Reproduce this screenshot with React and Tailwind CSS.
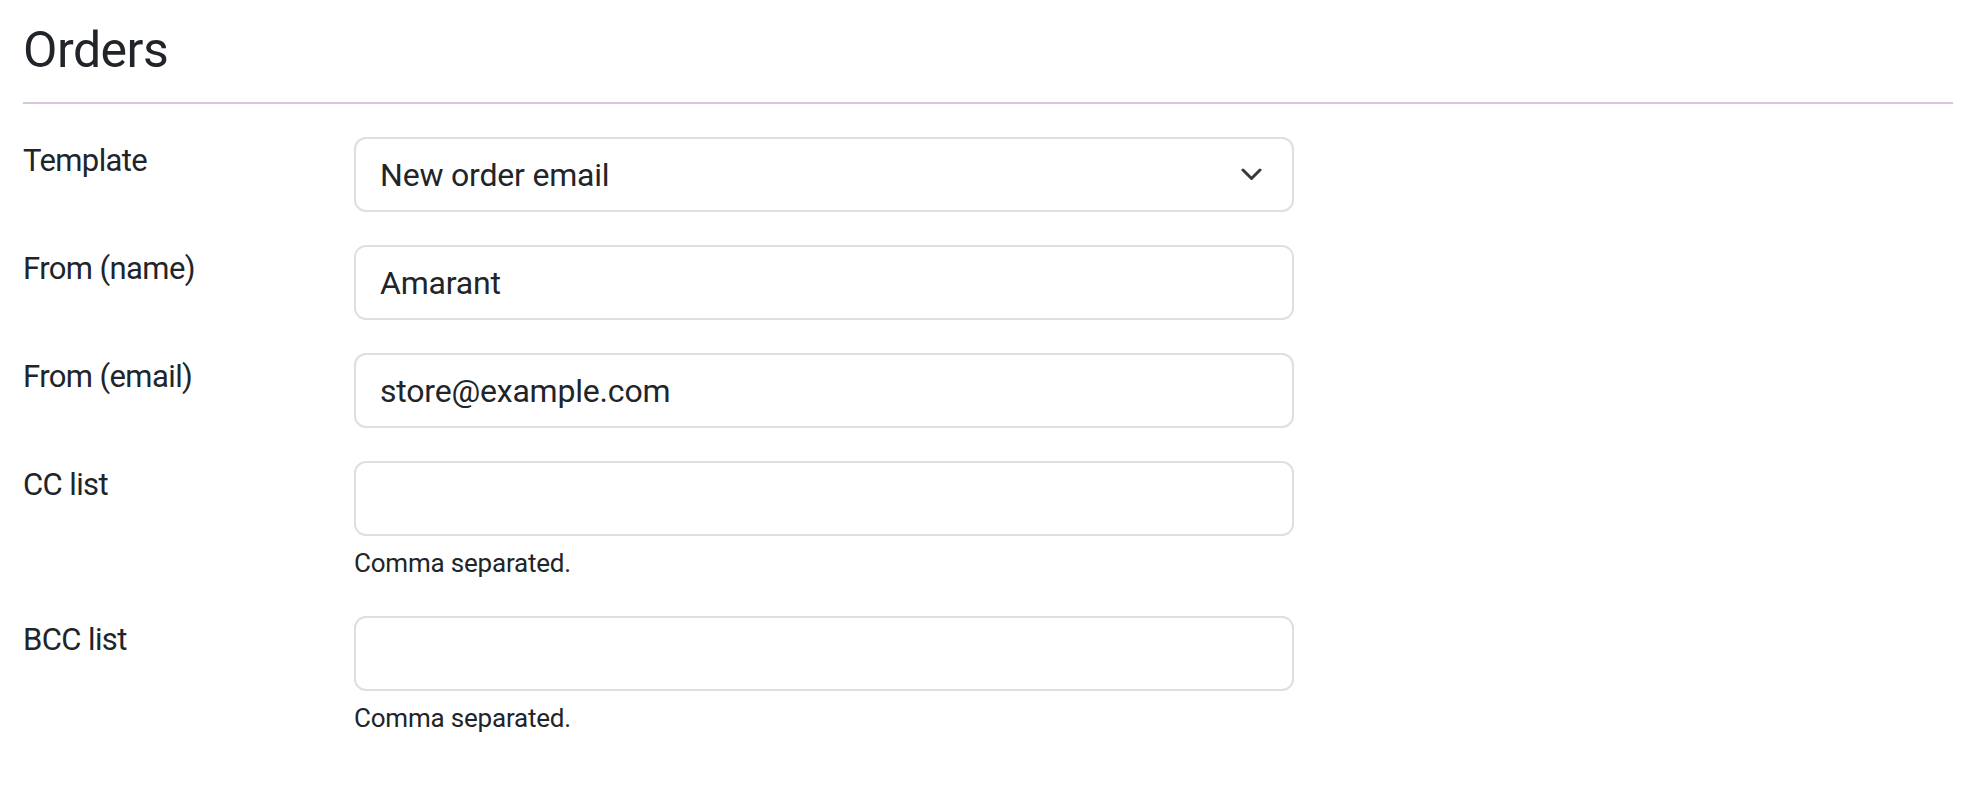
import React from "react";

const Chevron = () => (
  <svg width="21" height="13" viewBox="0 0 21 13" fill="none">
    <path d="M2 2 L10.5 10.5 L19 2" stroke="#343a40" strokeWidth="3" strokeLinecap="round" strokeLinejoin="round" />
  </svg>
);

const Field = ({ label, children, help }) => (
  <div className="flex">
    <label className="w-[331px] shrink-0 pt-[1px] text-[31px] leading-[46px] tracking-[-0.6px]">{label}</label>
    <div className="w-[940px]">
      {children}
      {help && <div className="mt-[8px] text-[26px] leading-[39px] tracking-[-0.2px]">{help}</div>}
    </div>
  </div>
);

const TextBox = ({ value }) => (
  <div className="h-[75px] flex items-center px-[24px] border-2 border-[#dcdfe3] rounded-[12px] bg-white text-[32px] tracking-[-0.2px]">
    {value}
  </div>
);

export default function App() {
  return (
    <div className="min-h-screen bg-white text-[#212529] px-[23px] pt-[21px]" style={{ fontFamily: "Roboto, sans-serif" }}>
      <h2 className="text-[50px] leading-[59px] font-normal tracking-[-0.5px]">Orders</h2>
      <div className="mt-[22px] h-[2px] bg-[#d6c6df]" />

      <div className="mt-[33px] flex flex-col gap-[33px]">
        <Field label="Template">
          <div className="h-[75px] flex items-center justify-between pl-[24px] pr-[30px] border-2 border-[#dcdfe3] rounded-[12px] bg-white text-[32px] tracking-[-0.2px]">
            <span>New order email</span>
            <Chevron />
          </div>
        </Field>
        <Field label="From (name)">
          <TextBox value="Amarant" />
        </Field>
        <Field label="From (email)">
          <TextBox value="store@example.com" />
        </Field>
        <Field label="CC list" help="Comma separated.">
          <TextBox value="" />
        </Field>
        <Field label="BCC list" help="Comma separated.">
          <TextBox value="" />
        </Field>
      </div>
    </div>
  );
}
